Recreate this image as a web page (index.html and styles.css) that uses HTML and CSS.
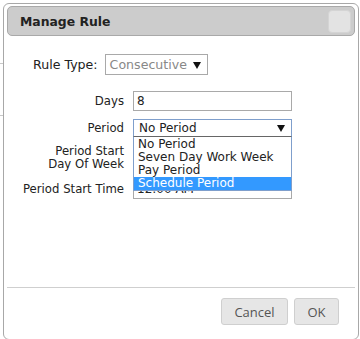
FILE: index.html
```html
<!DOCTYPE html>
<html lang="en">
<head>
    <meta charset="UTF-8">
    <meta name="viewport" content="width=device-width, initial-scale=1.0">
    <title>Manage Rule</title>
    <link rel="stylesheet" href="styles.css">
</head>
<body>
    <div class="backdrop-line line-a"></div>
    <div class="backdrop-line line-b"></div>
    <div class="dialog">
        <div class="titlebar">
            <span class="title">Manage Rule</span>
            <button class="close" aria-label="Close"></button>
        </div>

        <div class="content">
            <div class="rule-row">
                <label class="rule-label">Rule Type:</label>
                <div class="select rule-select">
                    <span class="placeholder">Consecutive</span>
                    <span class="arrow"></span>
                </div>
            </div>

            <div class="fields">
                <label class="field-label">Days</label>
                <div class="input">8</div>

                <label class="field-label">Period</label>
                <div class="period-wrap">
                    <div class="select period-select">
                        <span>No Period</span>
                        <span class="arrow"></span>
                    </div>
                    <ul class="dropdown">
                        <li>No Period</li>
                        <li>Seven Day Work Week</li>
                        <li>Pay Period</li>
                        <li class="selected">Schedule Period</li>
                    </ul>
                </div>

                <label class="field-label two-line">Period Start<br>Day Of Week</label>
                <div class="select week-select">
                    <span class="arrow"></span>
                </div>

                <label class="field-label">Period Start Time</label>
                <div class="input">12:00 AM</div>
            </div>
        </div>

        <div class="footer">
            <button class="btn cancel">Cancel</button>
            <button class="btn ok">OK</button>
        </div>
    </div>
</body>
</html>
```

FILE: styles.css
```css
body {
    margin: 0;
    background: #fff;
    font-family: "DejaVu Sans", Verdana, sans-serif;
    font-size: 12px;
    color: #222;
}
.backdrop-line {
    position: absolute;
    left: 0;
    width: 3px;
    height: 1px;
    background: #c8c8c8;
}
.line-a { top: 63px; }
.line-b { top: 115px; }
.dialog {
    margin: 3px 0 0 3px;
    width: 348px;
    height: 331px;
    padding: 2px 3px 2px 3px;
    border: 1px solid #a8a8a8;
    border-radius: 6px;
    background: #fff;
    display: flex;
    flex-direction: column;
}
.titlebar {
    height: 28px;
    border: 1px solid #a9a9a9;
    border-radius: 5px;
    background: #cccccc;
    display: flex;
    align-items: center;
    justify-content: space-between;
    padding: 0 3px 0 12px;
}
.title {
    font-weight: bold;
    font-size: 12.4px;
    color: #222;
}
.close {
    width: 23px;
    height: 23px;
    border: 1px solid #d4d4d4;
    border-radius: 4px;
    background: #e3e3e3;
    padding: 0;
}
.content {
    flex: 1;
}
.rule-row {
    display: flex;
    align-items: center;
    margin: 18px 0 0 26px;
    gap: 7px;
    font-size: 12.6px;
}
.select {
    position: relative;
    box-sizing: border-box;
    border: 1px solid #a9a9a9;
    background: #fff;
    padding: 0 4px;
    display: flex;
    align-items: center;
}
.arrow {
    position: absolute;
    right: 6px;
    top: 50%;
    margin-top: -3px;
    border-left: 4px solid transparent;
    border-right: 4px solid transparent;
    border-top: 7px solid #111;
}
.rule-select {
    width: 103px;
    height: 21px;
    font-size: 12.6px;
}
.placeholder {
    color: #888;
}
.fields {
    display: grid;
    grid-template-columns: 117px 159px;
    column-gap: 9px;
    row-gap: 8px;
    align-items: center;
    margin-top: 16px;
}
.field-label {
    text-align: right;
    line-height: 13px;
    font-size: 11.7px;
}
.input {
    box-sizing: border-box;
    height: 20px;
    border: 1px solid #a9a9a9;
    padding: 0 3px;
    display: flex;
    align-items: center;
    background: #fff;
}
.period-wrap {
    position: relative;
}
.period-select {
    height: 18px;
    border-color: #7f9fcc;
    padding: 0 5px;
}
.week-select {
    height: 20px;
}
.dropdown {
    position: absolute;
    top: 17px;
    left: 0;
    right: 0;
    margin: 0;
    padding: 1px 0 0;
    list-style: none;
    border: 1px solid #7f9fcc;
    border-top-color: #666;
    background: #fff;
    z-index: 2;
}
.dropdown li {
    height: 13px;
    line-height: 13px;
    padding: 0 4px;
}
.dropdown .selected {
    background: #3399ff;
    color: #fff;
}
.footer {
    height: 50px;
    border-top: 1px solid #cfcfcf;
    display: flex;
    justify-content: flex-end;
    align-items: flex-start;
    gap: 6px;
    padding: 10px 16px 0 0;
    box-sizing: border-box;
}
.btn {
    height: 27px;
    padding: 0;
    border: 1px solid #cfcfcf;
    border-radius: 3px;
    background: #e6e6e6;
    color: #555;
    font-family: "Open Sans", sans-serif;
    font-size: 13px;
}
.cancel { width: 67px; }
.ok { width: 45px; }
```
